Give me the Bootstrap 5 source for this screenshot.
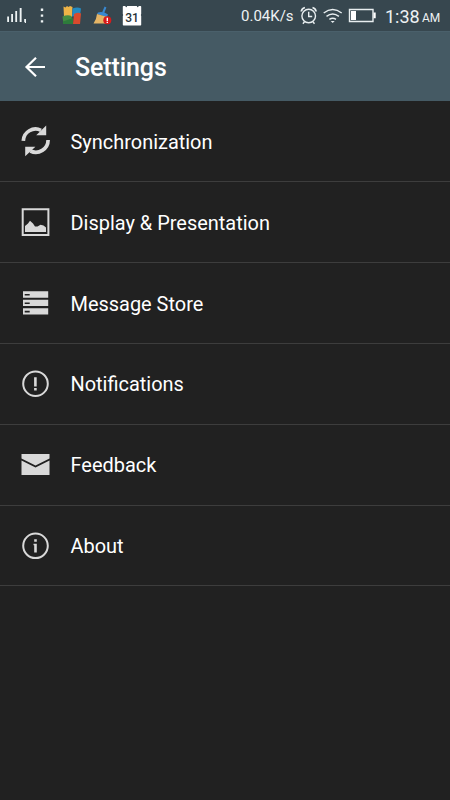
<!DOCTYPE html>
<html lang="en">
<head>
<meta charset="utf-8">
<meta name="viewport" content="width=device-width, initial-scale=1">
<title>Settings</title>
<link href="https://cdn.jsdelivr.net/npm/bootstrap@5.3.0/dist/css/bootstrap.min.css" rel="stylesheet">
<style>
body { background: #212121; color: #fff; font-family: Roboto, "Noto Sans", sans-serif; height: 800px; overflow: hidden; }
svg { display: block; flex: none; }
.status-bar { height: 31px; background: #37474f; color: #eef2f3; padding: 0 10px 0 7px; line-height: 31px; white-space: nowrap; }
.speed { font-size: 15px; width: 53px; margin-right: 6px; padding-top: 2px; }
.clock { font-size: 18px; width: 33px; margin: 0 4px 0 9px; padding-top: 2px; }
.meridiem { font-size: 12px; width: 18px; padding-top: 5px; }
.app-bar { height: 70px; background: #455a64; padding: 0 24px; border-top: 1px solid #4a606b; }
.app-title { font-size: 25px; font-weight: 500; line-height: 30px; letter-spacing: -.1px; margin: 3px 0 0 28px; }
.settings { --bs-list-group-bg: #212121; --bs-list-group-color: #fff; }
.settings .list-group-item { height: 81px; padding: 0 18px; border: 0; border-bottom: 1px solid #3d3d3d; font-size: 19.950px; line-height: 24px; }
.settings .list-group-item:last-child { border-bottom: 1px solid #3d3d3d; height: 80px; }
.settings svg { margin: 0 17px 0 -.5px; }
.settings span { padding-top: 2px; }
.settings .list-group-item:nth-child(n+4) span { padding-top: 0; }
</style>
<script src="https://cdn.jsdelivr.net/npm/bootstrap@5.3.0/dist/js/bootstrap.bundle.min.js"></script>
</head>
<body>
<header>
  <div class="status-bar d-flex align-items-center justify-content-between">
    <div class="d-flex align-items-center">
      <svg width="55" height="31" viewBox="7 0 55 31" fill="#eef3f4">
        <path d="M7.200 16.500H9v5.500H7.200zM11.200 14H13v8h-1.800zM15.300 11h1.800v11h-1.800zM19.700 8h1.900v14h-1.900zM24.200 19H26v4h-1v-.8h-.8z"/>
        <path d="M40.800 8.500h2.400v2.400h-2.400zM40.800 14.400h2.400v2.400h-2.400zM40.800 20.200h2.400v2.400h-2.400z"/>
      </svg>
      <svg width="31" height="31" viewBox="62 0 31 31">
        <path d="M63.500 6.500l2 1 1.500-1.500 1.500 1 1.500-1 2.500 1-.5 10h-8z" fill="#efb447"/>
        <path d="M72.500 8.500q5-2 8.500 0l-1 7-8 1z" fill="#248ac0"/>
        <path d="M62.500 16.500q5-2 9-.5l1 8h-9z" fill="#458d42"/>
        <path d="M74 14q4-2 7-.5l-1 10.500h-7z" fill="#d84a2d"/>
        <path d="M63 21.500l10-3.500v6H63z" fill="#2d7b3b"/>
      </svg>
      <svg width="29" height="31" viewBox="93 0 29 31">
        <path d="M105.500 7l-2.500 6" stroke="#3989d1" stroke-width="2"/>
        <path d="M98 12.500q5-1.500 10 2l-1 2.500-10-3z" fill="#3989d1"/>
        <path d="M97 14l10.500 3 .5 6.500H93.500q3-4 3.500-9.500z" fill="#e5b566"/>
        <circle cx="107.300" cy="20.300" r="4" fill="#d91b1b"/>
        <path d="M106.600 17.800h1.400v3.200h-1.400zM106.600 21.800h1.400v1.200h-1.400z" fill="#fff"/>
      </svg>
      <svg width="21" height="31" viewBox="122 0 21 31">
        <path d="M123.500 6h1.800q.9 2.500 1.900 0h9.600q.9 2.500 1.900 0h1.800q.7 0 .7.700V14l-.4 1 .4 1v8.700q0 .7-.7.700h-17q-.7 0-.7-.7V16l.4-1-.4-1V6.700q0-.7.700-.7z" fill="#fff"/>
        <text x="132" y="21.600" text-anchor="middle" font-family="Roboto, sans-serif" font-size="12" font-weight="500" fill="#263238">31</text>
      </svg>
    </div>
    <div class="d-flex align-items-center">
      <div class="speed">0.04K/s</div>
      <svg width="76" height="31" viewBox="300 0 76 31" fill="none" stroke="#e8eef0" stroke-width="1.400">
        <circle cx="308.700" cy="16" r="6.800"/>
        <path d="M308.700 11.800v4.700h3.500M304.500 21.800l-1.600 2M312.900 21.800l1.600 2"/>
        <path d="M301.300 11.500q.3-3 3.600-4M316.100 11.500q-.3-3-3.600-4" stroke-width="1.800"/>
        <path d="M323.700 13q9-7 18 0M326.500 16.400q6.200-4.800 12.400 0M329.400 19.400q3.300-2.400 6.600 0"/>
        <path d="M330.700 20.900h4l-2 2.100z" fill="#e8eef0" stroke="none"/>
        <path d="M349.500 9.500h23.500v12h-23.500z"/>
        <path d="M351 11h5v9h-5zM373.500 12.500h2.200v5.800h-2.200z" fill="#fff" stroke="none"/>
      </svg>
      <div class="clock">1:38</div>
      <div class="meridiem">AM</div>
    </div>
  </div>
  <nav class="app-bar d-flex align-items-center">
    <svg width="23" height="24" viewBox="24 54 23 24" fill="none" stroke="#fff" stroke-width="2.200"><path d="M45 66H26.500M36 56.800L26.500 66l9.500 9.300"/></svg>
    <h1 class="app-title">Settings</h1>
  </nav>
</header>
<main class="list-group list-group-flush settings">
  <a href="#" class="list-group-item d-flex align-items-center">
    <svg width="36" height="36" viewBox="-2 -2.500 36 36"><path d="M3.300 15.300A12.300 12.300 0 0 1 21 4.800M28.100 14.500A12.300 12.300 0 0 1 10.400 25.500" fill="none" stroke="#d9d9d9" stroke-width="3.700"/><path d="M26.200 0v9.700h-10zM5.200 30.700v-9.500h10.200z" fill="#d9d9d9"/></svg>
    <span>Synchronization</span>
  </a>
  <a href="#" class="list-group-item d-flex align-items-center">
    <svg width="36" height="36" viewBox="18 204 36 36"><path d="M22.700 209.300h25.700v25.700H22.700z" fill="none" stroke="#d9d9d9" stroke-width="2"/><path d="M25 232v-6l3-2.500 2-2.700 3 2.700 2 3h2.500l3-1.700 3 .8 2.500 2v4.400z" fill="#d9d9d9"/></svg>
    <span>Display &amp; Presentation</span>
  </a>
  <a href="#" class="list-group-item d-flex align-items-center">
    <svg width="36" height="36" viewBox="18 285 36 36"><path d="M23 291.300h25.200v6.400H23zM23 299.800h25.200v6.200H23zM23 308.200h25.200v6.200H23z" fill="#d9d9d9"/><path d="M24.700 294h5v1.600h-5zM24.700 302.400h5v1.600h-5zM24.700 310.800h5v1.600h-5z" fill="#212121"/></svg>
    <span>Message Store</span>
  </a>
  <a href="#" class="list-group-item d-flex align-items-center">
    <svg width="36" height="36" viewBox="18 366 36 36"><circle cx="35.500" cy="383.700" r="12.300" fill="none" stroke="#d9d9d9" stroke-width="2"/><path d="M34.100 377.200h2.600v9.200h-2.600zM34.100 388h2.600v2.500h-2.600z" fill="#d9d9d9"/></svg>
    <span>Notifications</span>
  </a>
  <a href="#" class="list-group-item d-flex align-items-center">
    <svg width="36" height="36" viewBox="18 447 36 36"><path d="M21.500 454h28v4.400l-14 7-14-7zM21.500 460.400l14 7 14-7V475h-28z" fill="#d9d9d9"/></svg>
    <span>Feedback</span>
  </a>
  <a href="#" class="list-group-item d-flex align-items-center">
    <svg width="36" height="36" viewBox="18 527.500 36 36"><circle cx="35.500" cy="545.300" r="12.300" fill="none" stroke="#d9d9d9" stroke-width="2"/><path d="M34.200 538.700h2.600v2.500h-2.600zM33.500 543.200h3.300v8.800h-2.600v-7.200h-.7z" fill="#d9d9d9"/></svg>
    <span>About</span>
  </a>
</main>
</body>
</html>
